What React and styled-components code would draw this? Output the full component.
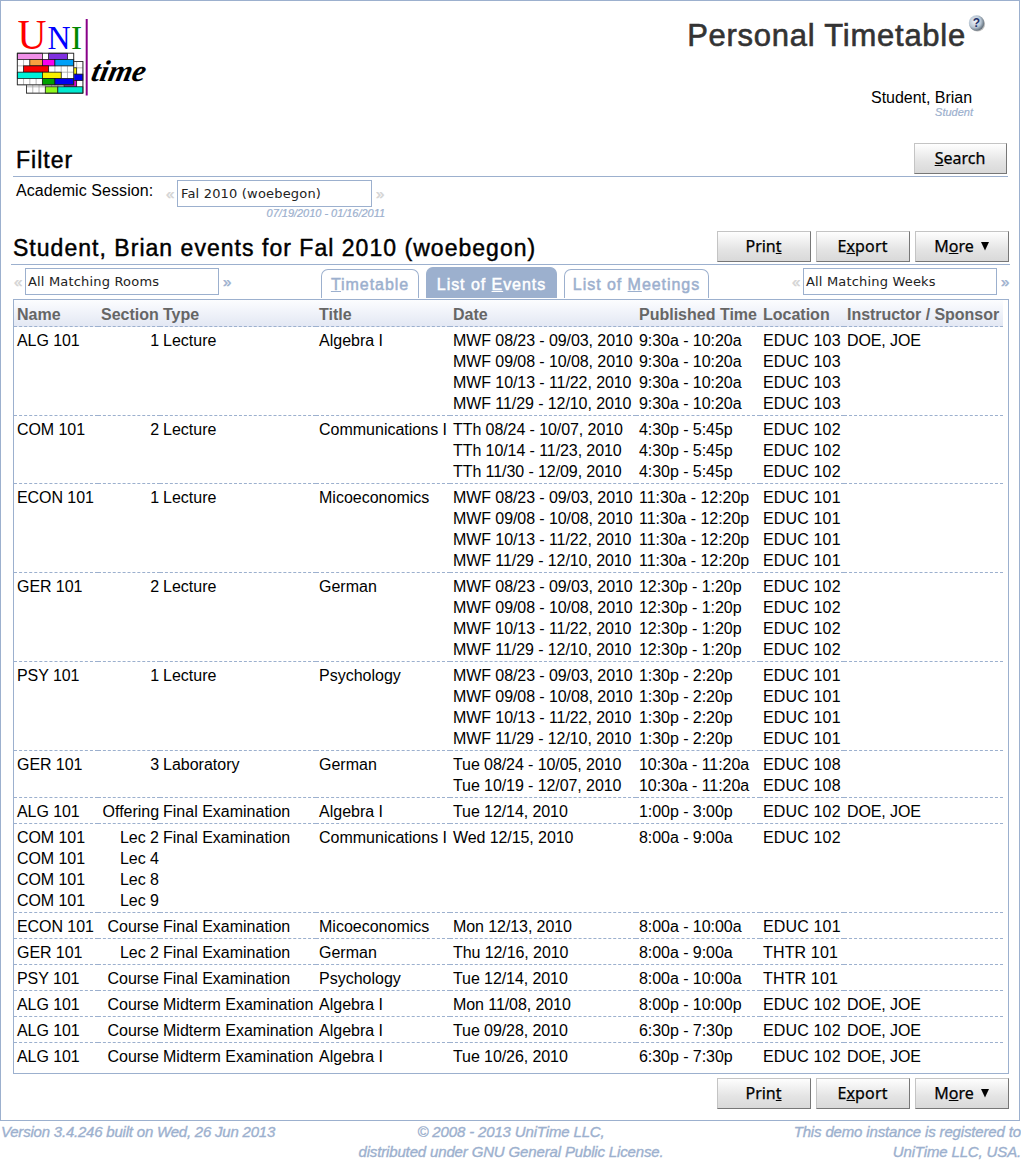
import React from "react";
import styled, { createGlobalStyle, css } from "styled-components";

const line = "#9cb0ce";
const sans = `"Liberation Sans", Arial, sans-serif`;

const Global = createGlobalStyle`
  html, body { margin: 0; padding: 0; background: #fff; }
  body { font: 16px/21px ${sans}; color: #000; }
  * { box-sizing: border-box; }
`;

const Page = styled.div`
  width: 1021px;
  height: 1160px;
  overflow: hidden;
`;

const Frame = styled.main`
  width: 1020px;
  height: 1121px;
  border: 1px solid ${line};
  padding: 0 10px 0 12px;
`;

const Header = styled.header`
  display: flex;
  justify-content: space-between;
  height: 141px;
`;

const LogoBox = styled.svg`
  display: block;
  margin: 1px 0 0 1px;
`;

const HeaderRight = styled.div`
  display: flex;
  flex-direction: column;
  align-items: flex-end;
`;

const TitleRow = styled.div`
  display: flex;
  align-items: flex-start;
  padding: 12px 23px 0 0;
`;

const PageTitle = styled.h1`
  margin: 4px 0 0;
  font-size: 31px;
  line-height: 37px;
  font-weight: 400;
  letter-spacing: 0.75px;
  color: #333;
  -webkit-text-stroke: 0.6px #333;
`;

const UserName = styled.div`
  margin: 33px 37px 0 0;
  letter-spacing: -0.03px;
`;

const UserRole = styled.div`
  margin: -2px 36px 0 0;
  font-size: 11px;
  line-height: 12px;
  font-style: italic;
  color: ${line};
  -webkit-text-stroke: 0.2px ${line};
`;

const SectionBar = styled.div`
  display: flex;
  justify-content: space-between;
  height: ${(p) => p.$height}px;
  margin-left: ${(p) => p.$outdent || 0}px;
  margin-right: ${(p) => p.$right || 0}px;
  padding: 0 ${(p) => p.$inset || 0}px 0 ${(p) => p.$indent}px;
  border-bottom: 1px solid ${line};
`;

const SectionTitle = styled.h2`
  margin: ${(p) => p.$top}px 0 0;
  font-size: 23px;
  line-height: 27px;
  font-weight: 400;
  letter-spacing: 1.03px;
  -webkit-text-stroke: 0.45px #000;
`;

const ButtonRow = styled.div`
  display: flex;
  gap: 5px;
  margin-top: ${(p) => p.$top || 0}px;
`;

const Button = styled.button`
  width: ${(p) => p.$width || 94}px;
  height: 31px;
  padding: 0 1px 2px 0;
  border: 1px solid;
  border-color: #c4c4c4 #777 #777 #c4c4c4;
  background: linear-gradient(#fefefe, #e4e4e4 60%, #d9d9d9);
  font: 400 16px/20px "Noto Sans", "Open Sans", sans-serif;
  letter-spacing: ${(p) => p.$spacing || 0}px;
  color: #000;
  -webkit-text-stroke: 0.25px #000;
  white-space: nowrap;
`;

const Arrow = styled.svg`
  margin-left: 7px;
  vertical-align: 1px;
`;

const FilterRow = styled.div`
  display: flex;
  align-items: flex-start;
  height: 54px;
  padding: 3px 0 0 3px;
`;

const FilterLabel = styled.label`
  width: 150px;
  line-height: 21px;
  letter-spacing: 0.07px;
`;

const SessionField = styled.div`
  display: flex;
  flex-direction: column;
  width: 219px;
`;

const Picker = styled.div`
  display: flex;
  align-items: center;
`;

const Select = styled.div`
  width: ${(p) => p.$width || 195}px;
  height: 27px;
  margin: 0 4px 0 3px;
  padding: 0 0 0 ${(p) => (p.$width ? 2 : 3)}px;
  border: 1px solid ${line};
  font: 13px/25px "DejaVu Sans", Verdana, sans-serif;
  letter-spacing: ${(p) => p.$spacing}px;
  white-space: nowrap;
  color: #222;
`;

const Chevron = styled.span`
  width: 8px;
  height: 15px;
  font: 15px/15px ${sans};
  color: ${(p) => (p.$active ? line : "#d4d4d4")};
  -webkit-text-stroke: 0.5px currentColor;
`;

const SessionDates = styled.div`
  align-self: flex-end;
  font-size: 11px;
  line-height: 12px;
  font-style: italic;
  letter-spacing: -0.03px;
  color: ${line};
  -webkit-text-stroke: 0.2px ${line};
  white-space: nowrap;
`;

const Controls = styled.div`
  display: flex;
  justify-content: space-between;
  align-items: flex-start;
  height: 34px;
  padding: 3px 0 0 1px;
`;

const Tabs = styled.nav`
  display: flex;
  align-items: flex-end;
  gap: 7px;
  height: 30px;
  margin: 0 0 0 6px;
`;

const Tab = styled.a`
  width: ${(p) => p.$width}px;
  height: 29px;
  padding: 4px 0 0 1px;
  text-align: center;
  border: 1px solid ${line};
  border-bottom: 0;
  border-radius: 7px 7px 0 0;
  letter-spacing: 0.95px;
  line-height: 22px;
  color: ${line};
  -webkit-text-stroke: 0.5px currentColor;
  white-space: nowrap;
  ${(p) =>
    p.$selected &&
    css`
      height: 31px;
      padding-top: 6px;
      background: ${line};
      color: #fff;
    `}
`;

const TableBox = styled.section`
  width: 996px;
  height: 775px;
  border: 1px solid ${line};
`;

const Row = styled.div`
  display: grid;
  grid-template-columns: 84px 62px 156px 134px 186px 124px 84px 159px;
  width: 989px;
  ${(p) =>
    p.$head &&
    css`
      background: linear-gradient(#fcfdff, #e2e7f3);
      font-weight: bold;
      color: #666;
    `}
`;

const Cell = styled.div`
  padding: ${(p) => (p.$head ? "4px 0 1px 3px" : "3px 0 1px 3px")};
  border-bottom: 1px ${(p) => (p.$last ? "none" : "dashed")} ${line};
  white-space: nowrap;
  letter-spacing: ${(p) => p.$spacing || 0}px;
  ${(p) =>
    p.$right &&
    css`
      padding-right: 1px;
      padding-left: 0;
      text-align: right;
    `}
`;

const BottomBar = styled.div`
  display: flex;
  justify-content: flex-end;
  padding-top: 4px;
`;

const Footer = styled.footer`
  display: grid;
  grid-template-columns: 340px 1fr 340px;
  padding: 1px 0 0 1px;
  font-style: italic;
  font-size: 15px;
  line-height: 20px;
  color: ${line};
  -webkit-text-stroke: 0.35px ${line};
`;

const FooterCell = styled.div`
  text-align: ${(p) => p.$align};
  letter-spacing: ${(p) => p.$spacing || 0}px;
  white-space: nowrap;
`;

const frontBlocks = [
  [0, 0, 4, "#f090e8"], [5, 0, 3, "#8030e0"],
  [2, 1, 2, "#f8a040"], [4, 1, 2, "#f800f0"], [6, 1, 3, "#00a0f8"],
  [1, 2, 4, "#f80000"],
  [0, 3, 4, "#00f0d8"], [4, 3, 3, "#f8f000"],
  [4, 4, 2, "#00a000"], [6, 4, 3, "#0000f0"],
];

const backBlocks = [
  [7, 1, 1, "#f8f000"], [6, 2, 3, "#0000f0"],
  [6, 3, 2, "#d800c8"], [3, 4, 2, "#90f820"], [5, 4, 4, "#00e8d0"],
];

function Grid({ x, y, blocks }) {
  const cw = 6.27;
  const ch = 6.33;
  return (
    <g transform={`translate(${x} ${y})`}>
      <rect width={cw * 9} height={ch * 5} fill="#fff" />
      {[...Array(10)].map((_, i) => (
        <path key={`v${i}`} d={`M${i * cw} 0V${ch * 5}`} stroke="#999" strokeWidth=".7" />
      ))}
      {[...Array(6)].map((_, i) => (
        <path key={`h${i}`} d={`M0 ${i * ch}H${cw * 9}`} stroke="#999" strokeWidth=".7" />
      ))}
      {blocks.map(([c, r, w, fill]) => (
        <rect key={`${c}-${r}`} x={c * cw} y={r * ch} width={w * cw} height={ch} fill={fill} stroke="#111" strokeWidth=".7" />
      ))}
      <rect width={cw * 9} height={ch * 5} fill="none" stroke="#222" strokeWidth=".8" />
    </g>
  );
}

function Logo() {
  return (
    <LogoBox width="140" height="98" viewBox="14 2 140 98">
      <g fontFamily="Liberation Serif, Times New Roman, serif">
        <text x="17.5" y="49" fontSize="43" fill="#f00" textLength="29" lengthAdjust="spacingAndGlyphs">U</text>
        <text x="47.5" y="49" fontSize="33" fill="#00f" textLength="23" lengthAdjust="spacingAndGlyphs">N</text>
        <text x="71" y="49" fontSize="33" fill="#080" textLength="11" lengthAdjust="spacingAndGlyphs">I</text>
      </g>
      <Grid x={26.5} y={61.5} blocks={backBlocks} />
      <Grid x={17.3} y={53.2} blocks={frontBlocks} />
      <path d="M86.7 19V95.5" stroke="#808" strokeWidth="2" />
      <text transform="translate(90 80.5) skewX(-12)" fontFamily="Liberation Serif, Times New Roman, serif" fontSize="30" fontStyle="italic" fontWeight="bold" textLength="54" lengthAdjust="spacingAndGlyphs">time</text>
    </LogoBox>
  );
}

function HelpIcon() {
  return (
    <svg width="20" height="20" viewBox="0 0 20 20">
      <defs>
        <radialGradient id="ball" cx=".4" cy=".4" r=".65">
          <stop offset="0" stopColor="#f0f4fa" />
          <stop offset=".6" stopColor="#b8c6d4" />
          <stop offset="1" stopColor="#55626e" />
        </radialGradient>
      </defs>
      <circle cx="11.5" cy="11" r="7.6" fill="#777" opacity=".5" />
      <circle cx="10.5" cy="10" r="7.7" fill="url(#ball)" />
      <text x="10.5" y="14" textAnchor="middle" fontSize="12" fontWeight="bold" fontFamily="Liberation Sans, Arial, sans-serif" fill="#223068">?</text>
    </svg>
  );
}

function Actions() {
  return (
    <ButtonRow>
      <Button>Prin<u>t</u></Button>
      <Button $spacing={0.15}>E<u>x</u>port</Button>
      <Button>
        M<u>o</u>re
        <Arrow width="8" height="9" viewBox="0 0 8 9"><path d="M0 0H8L4 8.5Z" /></Arrow>
      </Button>
    </ButtonRow>
  );
}

const dates = ["MWF 08/23 - 09/03, 2010", "MWF 09/08 - 10/08, 2010", "MWF 10/13 - 11/22, 2010", "MWF 11/29 - 12/10, 2010"];
const rep = (v, n) => Array(n).fill(v);

const rows = [
  [["ALG 101"], ["1"], "Lecture", "Algebra I", dates, rep("9:30a - 10:20a", 4), rep("EDUC 103", 4), "DOE, JOE"],
  [["COM 101"], ["2"], "Lecture", "Communications I", ["TTh 08/24 - 10/07, 2010", "TTh 10/14 - 11/23, 2010", "TTh 11/30 - 12/09, 2010"], rep("4:30p - 5:45p", 3), rep("EDUC 102", 3), ""],
  [["ECON 101"], ["1"], "Lecture", "Micoeconomics", dates, rep("11:30a - 12:20p", 4), rep("EDUC 101", 4), ""],
  [["GER 101"], ["2"], "Lecture", "German", dates, rep("12:30p - 1:20p", 4), rep("EDUC 102", 4), ""],
  [["PSY 101"], ["1"], "Lecture", "Psychology", dates, rep("1:30p - 2:20p", 4), rep("EDUC 101", 4), ""],
  [["GER 101"], ["3"], "Laboratory", "German", ["Tue 08/24 - 10/05, 2010", "Tue 10/19 - 12/07, 2010"], rep("10:30a - 11:20a", 2), rep("EDUC 108", 2), ""],
  [["ALG 101"], ["Offering"], "Final Examination", "Algebra I", ["Tue 12/14, 2010"], ["1:00p - 3:00p"], ["EDUC 102"], "DOE, JOE"],
  [rep("COM 101", 4), ["Lec 2", "Lec 4", "Lec 8", "Lec 9"], "Final Examination", "Communications I", ["Wed 12/15, 2010"], ["8:00a - 9:00a"], ["EDUC 102"], ""],
  [["ECON 101"], ["Course"], "Final Examination", "Micoeconomics", ["Mon 12/13, 2010"], ["8:00a - 10:00a"], ["EDUC 101"], ""],
  [["GER 101"], ["Lec 2"], "Final Examination", "German", ["Thu 12/16, 2010"], ["8:00a - 9:00a"], ["THTR 101"], ""],
  [["PSY 101"], ["Course"], "Final Examination", "Psychology", ["Tue 12/14, 2010"], ["8:00a - 10:00a"], ["THTR 101"], ""],
  [["ALG 101"], ["Course"], "Midterm Examination", "Algebra I", ["Mon 11/08, 2010"], ["8:00p - 10:00p"], ["EDUC 102"], "DOE, JOE"],
  [["ALG 101"], ["Course"], "Midterm Examination", "Algebra I", ["Tue 09/28, 2010"], ["6:30p - 7:30p"], ["EDUC 102"], "DOE, JOE"],
  [["ALG 101"], ["Course"], "Midterm Examination", "Algebra I", ["Tue 10/26, 2010"], ["6:30p - 7:30p"], ["EDUC 102"], "DOE, JOE"],
];

const heads = ["Name", "Section", "Type", "Title", "Date", "Published Time", "Location", "Instructor / Sponsor"];
const spacing = [-0.07, -0.03, 0, 0, -0.08, -0.05, 0.15, -0.1];

export default function App() {
  return (
    <Page>
      <Global />
      <Frame>
        <Header>
          <Logo />
          <HeaderRight>
            <TitleRow>
              <PageTitle>Personal Timetable</PageTitle>
              <HelpIcon />
            </TitleRow>
            <UserName>Student, Brian</UserName>
            <UserRole>Student</UserRole>
          </HeaderRight>
        </Header>
        <SectionBar $height={35} $indent={3} $right={1} $inset={1}>
          <SectionTitle $top={5}>Filter</SectionTitle>
          <ButtonRow $top={1}>
            <Button $width={93}><u>S</u>earch</Button>
          </ButtonRow>
        </SectionBar>
        <FilterRow>
          <FilterLabel>Academic Session:</FilterLabel>
          <SessionField>
            <Picker>
              <Chevron>«</Chevron>
              <Select $spacing={0.18}>Fal 2010 (woebegon)</Select>
              <Chevron>»</Chevron>
            </Picker>
            <SessionDates>07/19/2010 - 01/16/2011</SessionDates>
          </SessionField>
        </FilterRow>
        <SectionBar $height={34} $indent={2} $outdent={-2} $right={-1} $inset={1}>
          <SectionTitle $top={4}>Student, Brian events for Fal 2010 (woebegon)</SectionTitle>
          <Actions />
        </SectionBar>
        <Controls>
          <Picker>
            <Chevron>«</Chevron>
            <Select $width={194} $spacing={0.18}>All Matching Rooms</Select>
            <Chevron $active>»</Chevron>
          </Picker>
          <Tabs>
            <Tab $width={98}><u>T</u>imetable</Tab>
            <Tab $width={131} $selected>List of <u>E</u>vents</Tab>
            <Tab $width={145}>List of <u>M</u>eetings</Tab>
          </Tabs>
          <Picker>
            <Chevron>«</Chevron>
            <Select $width={194} $spacing={0.18}>All Matching Weeks</Select>
            <Chevron $active>»</Chevron>
          </Picker>
        </Controls>
        <TableBox>
          <Row $head>
            {heads.map((h) => <Cell key={h} $head $spacing={h.startsWith("Instr") ? -0.04 : 0}>{h}</Cell>)}
          </Row>
          {rows.map((row, r) => (
            <Row key={r}>
              {row.map((value, c) => (
                <Cell key={c} $right={c === 1} $spacing={spacing[c]} $last={r === rows.length - 1}>
                  {(Array.isArray(value) ? value : [value]).map((text, i) => <div key={i}>{text}</div>)}
                </Cell>
              ))}
            </Row>
          ))}
        </TableBox>
        <BottomBar>
          <Actions />
        </BottomBar>
      </Frame>
      <Footer>
        <FooterCell $align="left" $spacing={-0.21}>Version 3.4.246 built on Wed, 26 Jun 2013</FooterCell>
        <FooterCell $align="center" $spacing={-0.15}>© 2008 - 2013 UniTime LLC,<br />distributed under GNU General Public License.</FooterCell>
        <FooterCell $align="right" $spacing={-0.15}>This demo instance is registered to<br />UniTime LLC, USA.</FooterCell>
      </Footer>
    </Page>
  );
}
